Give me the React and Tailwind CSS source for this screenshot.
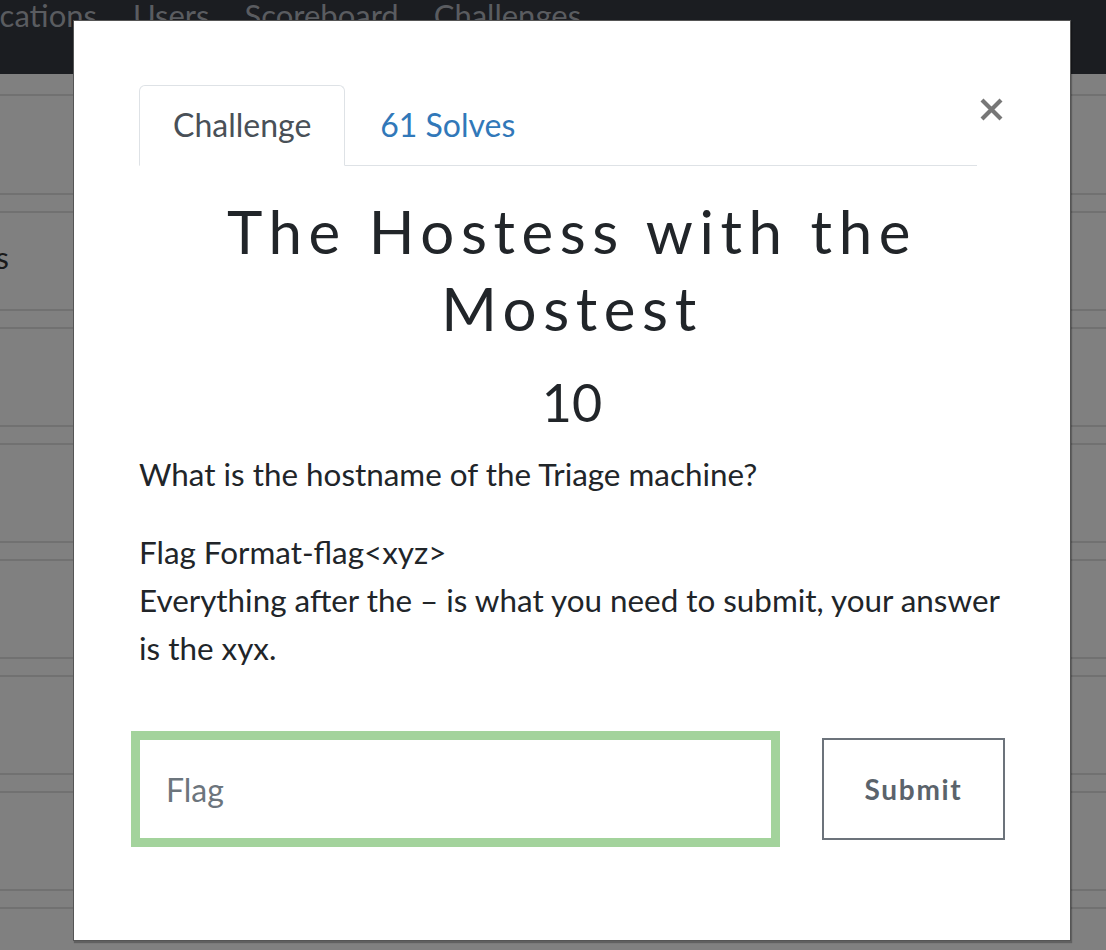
import React from "react";

function CloseIcon() {
  return (
    <svg width="23" height="23" viewBox="0 0 23 23">
      <path d="M2 2 L21 21 M21 2 L2 21" stroke="#777777" strokeWidth="4.2" strokeLinecap="butt" />
    </svg>
  );
}

export default function App() {
  const rows = [0, 1, 2, 3, 4, 5, 6];
  return (
    <div className="relative w-[1106px] h-[950px] overflow-hidden bg-[#808080] font-['Lato','Liberation_Sans',sans-serif]">
      <div className="h-[74px] bg-[#1b1d21] flex items-start overflow-hidden">
        <div className="flex -mt-[3px] text-[31px] leading-[36px] text-[#5a5c60] whitespace-nowrap">
          <div className="w-[97px] overflow-hidden flex justify-end">Notifications</div>
          <div className="ml-[36px]">Users</div>
          <div className="ml-[35px]">Scoreboard</div>
          <div className="ml-[35px]">Challenges</div>
        </div>
      </div>
      <div className="h-[20px]" />
      <div className="h-[2px] bg-[#717171]" />
      <div className="h-[97px]" />
      {rows.map((i) => (
        <React.Fragment key={i}>
          <div className="h-[2px] bg-[#717171]" />
          <div className="h-[16px]" />
          <div className="h-[2px] bg-[#717171]" />
          <div className="h-[96px] pt-[26px] flex items-start">
            {i === 0 && (
              <div className="w-[9px] overflow-hidden flex justify-end whitespace-nowrap text-[31px] leading-[36px] text-[#1a1a1a]">
                Hosts
              </div>
            )}
          </div>
        </React.Fragment>
      ))}

      <div className="absolute left-[73px] top-[20px] w-[998px] h-[921px] bg-white border border-[#555555] shadow-[1px_2px_1px_rgba(0,0,0,0.25)] px-[65px] pt-[64px]">
        <div className="flex items-start">
          <div className="flex-1 flex border-b border-[#dee2e6]">
            <div className="-mb-px border border-[#dee2e6] border-b-white rounded-t-[6px] px-[33px] pt-[20px] pb-[21px] text-[32px] leading-[38px] text-[#495057] bg-white">
              Challenge
            </div>
            <div className="-mb-px border border-transparent px-[34px] pt-[20px] pb-[21px] text-[32px] leading-[38px] text-[#3178b9]">
              61 Solves
            </div>
          </div>
          <button className="ml-[3px] mt-[13px] mr-[2px] w-[23px] h-[23px] flex items-center justify-center">
            <CloseIcon />
          </button>
        </div>

        <h1 className="mt-[27px] text-center text-[60px] leading-[77px] font-normal tracking-[0.11em] text-[#212529]">
          The Hostess with the Mostest
        </h1>
        <div className="mt-[24px] text-center text-[52px] leading-[62px] text-[#212529]">10</div>

        <div className="mt-[17px] text-[31.4px] leading-[48px] text-[#212529]">
          <p>What is the hostname of the Triage machine?</p>
          <p className="mt-[30px]">
            Flag Format-flag&lt;xyz&gt;
            <br />
            Everything after the – is what you need to submit, your answer is the xyx.
          </p>
        </div>

        <div className="mt-[66px] flex items-center">
          <input
            placeholder="Flag"
            className="w-[633px] h-[100px] border border-[#a3d39c] shadow-[0_0_0_8px_#a3d39c] outline-none pl-[26px] text-[32px] text-[#495057] placeholder:text-[#6c757d] font-['Lato','Liberation_Sans',sans-serif]"
          />
          <button className="ml-[50px] w-[183px] h-[102px] border-2 border-[#6c737b] text-[28px] font-bold tracking-[0.06em] text-[#5b636b]">
            Submit
          </button>
        </div>
      </div>
    </div>
  );
}
